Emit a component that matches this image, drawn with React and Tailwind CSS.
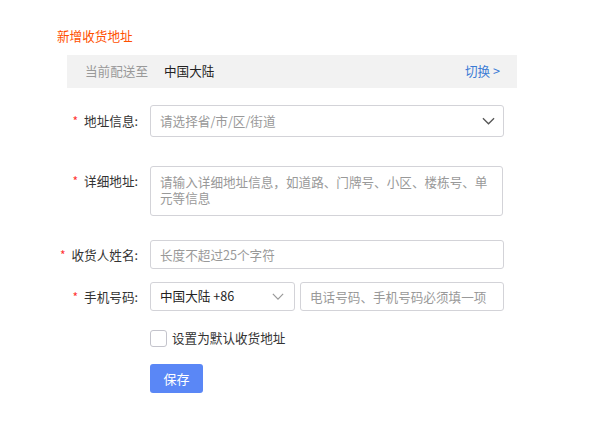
import React, { useState } from 'react'

const font = { fontFamily: '"Noto Sans CJK SC", "Noto Sans", sans-serif' }

function Chevron({ className }) {
  return (
    <svg viewBox="0 0 14 8" className={className} fill="none" stroke="currentColor" strokeWidth="1.4">
      <path d="M1 1l6 6 6-6" />
    </svg>
  )
}

function Label({ children, top }) {
  return (
    <div
      className={`w-[138px] shrink-0 flex justify-end text-[#333] ${top ? 'items-start pt-[7px]' : 'items-center'}`}
    >
      <span className="text-[#f33] mr-[6px] text-[12px] leading-[16px]">*</span>
      <span className="leading-[16px]">{children}</span>
    </div>
  )
}

export default function App() {
  const [isDefault, setIsDefault] = useState(false)

  return (
    <div className="w-[600px] h-[427px] bg-white text-[12.6px]" style={font}>
      <div className="pt-[26px] pl-[57px] text-[#ff5000] leading-[20px]">新增收货地址</div>

      <div className="ml-[67px] mt-[9px] w-[450px] h-[33px] bg-[#f2f2f2] flex items-center pl-[18px] pr-[17px]">
        <span className="text-[#999]">当前配送至</span>
        <span className="ml-[16px] text-[#222]">中国大陆</span>
        <span className="ml-auto text-[#3a7bd5]">切换 &gt;</span>
      </div>

      <div className="mt-[17px] flex gap-[12px]">
        <Label>地址信息:</Label>
        <div className="w-[354px] h-[32px] border border-[#d3d3d8] rounded-[3px] flex items-center pl-[9px] pr-[8px]">
          <span className="text-[#999]">请选择省/市/区/街道</span>
          <Chevron className="ml-auto w-[13px] h-[8px] text-[#555]" />
        </div>
      </div>

      <div className="mt-[29px] flex gap-[12px]">
        <Label top>详细地址:</Label>
        <textarea
          className="w-[353px] h-[50px] border border-[#d3d3d8] rounded-[3px] pl-[9px] pr-[10px] pt-[7px] leading-[16px] resize-none outline-none placeholder:text-[#999]"
          placeholder="请输入详细地址信息，如道路、门牌号、小区、楼栋号、单元等信息"
        />
      </div>

      <div className="mt-[24px] flex gap-[12px]">
        <Label>收货人姓名:</Label>
        <input
          className="w-[354px] h-[29px] border border-[#d3d3d8] rounded-[3px] pl-[9px] outline-none placeholder:text-[#999]"
          placeholder="长度不超过25个字符"
        />
      </div>

      <div className="mt-[13px] flex gap-[12px]">
        <Label>手机号码:</Label>
        <div className="flex gap-[5px]">
          <div className="w-[145px] h-[29px] border border-[#d3d3d8] rounded-[3px] flex items-center pl-[9px] pr-[10px]">
            <span className="text-[#222]">中国大陆 +86</span>
            <Chevron className="ml-auto w-[12px] h-[7px] text-[#999]" />
          </div>
          <input
            className="w-[204px] h-[29px] border border-[#d3d3d8] rounded-[3px] pl-[9px] outline-none placeholder:text-[#999]"
            placeholder="电话号码、手机号码必须填一项"
          />
        </div>
      </div>

      <div className="mt-[18px] ml-[150px] flex items-center gap-[5px]">
        <button
          type="button"
          onClick={() => setIsDefault(!isDefault)}
          className="w-[17px] h-[17px] border border-[#c4c4cc] rounded-[3px] bg-white"
        />
        <span className="text-[#333]">设置为默认收货地址</span>
      </div>

      <div className="mt-[16px] ml-[150px]">
        <button
          type="button"
          className="w-[53px] h-[29px] rounded-[3px] bg-[#5a87f6] text-white text-[13px]"
        >
          保存
        </button>
      </div>
    </div>
  )
}
